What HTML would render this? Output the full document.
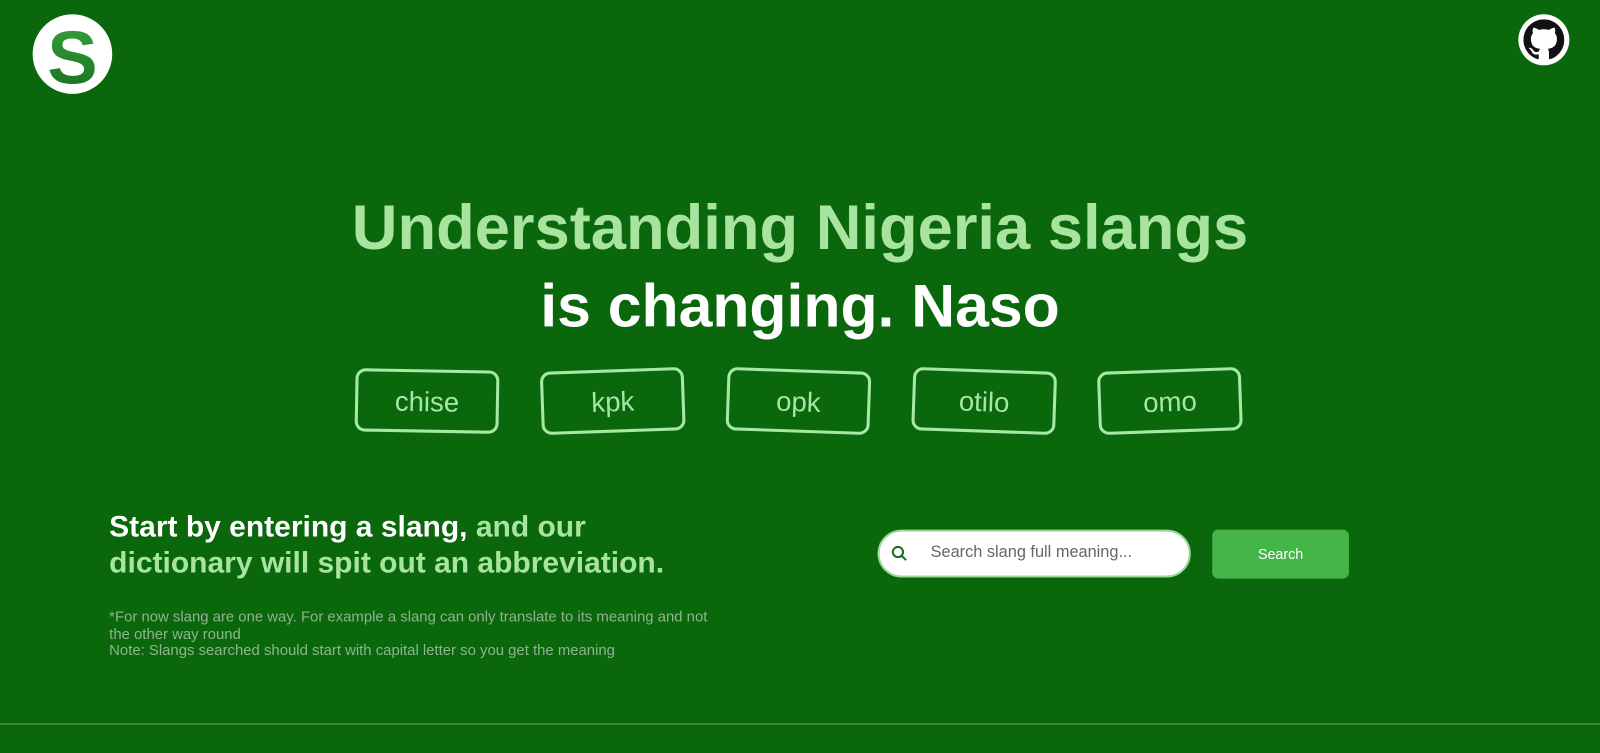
<!DOCTYPE html>
<html><head><style>
body{margin:0;width:1600px;height:753px;background:#0a670c;font-family:"Liberation Sans",sans-serif;overflow:hidden;position:relative}
#w{position:absolute;left:0;top:0;width:1568px;height:738px;transform:scale(1.0204);transform-origin:0 0}
.a{position:absolute}
.logo{left:32px;top:14px;width:78px;height:78px;border-radius:50%;background:#fff}
.gh{left:1488px;top:14px;width:50px;height:50px;border-radius:50%;background:#fff}
h1{position:absolute;left:0;width:1568px;text-align:center;margin:0;font-weight:bold;line-height:1}
.pill{position:absolute;top:362px;width:141px;height:62px;border:3px solid #a6e8a6;border-radius:10px;color:#a8e6a8;font-size:27px;text-align:center;line-height:58px;box-sizing:border-box}
.lead{left:107px;top:499px;font-size:29.4px;font-weight:bold;color:#fff;line-height:35px;width:556px}
.note{left:107px;top:597px;font-size:14.6px;color:#8fb48f;line-height:16.5px;width:604px}
.inp{left:860px;top:519px;width:307px;height:47px;border-radius:24px;background:#fff;border:2px solid #9bd89b;box-sizing:border-box}
.btn{left:1188px;top:519px;width:134px;height:48px;border-radius:6px;background:#45b449;color:#fff;font-size:14px;text-align:center;line-height:48px}
</style></head><body><div id="w">
<div class="a logo"><svg width="78" height="78" viewBox="0 0 78 78"><defs><linearGradient id="g" x1="0" y1="0" x2="0" y2="1"><stop offset="0" stop-color="#3aa33a"/><stop offset="1" stop-color="#136e22"/></linearGradient></defs><text x="39" y="68" text-anchor="middle" font-family="Liberation Sans" font-weight="bold" font-size="74" fill="url(#g)">S</text></svg></div>
<div class="a gh"><svg class="a" style="left:5px;top:5px" width="40" height="40" viewBox="0 0 16 16"><path fill="#111" d="M8 0C3.58 0 0 3.58 0 8c0 3.54 2.29 6.53 5.47 7.59.4.07.55-.17.55-.38 0-.19-.01-.82-.01-1.49-2.01.37-2.53-.49-2.69-.94-.09-.23-.48-.94-.82-1.13-.28-.15-.68-.52-.01-.53.63-.01 1.08.58 1.23.82.72 1.21 1.87.87 2.33.66.07-.52.28-.87.51-1.07-1.78-.2-3.64-.89-3.64-3.95 0-.87.31-1.59.82-2.15-.08-.2-.36-1.02.08-2.12 0 0 .67-.21 2.2.82.64-.18 1.32-.27 2-.27.68 0 1.36.09 2 .27 1.530-1.04 2.2-.82 2.2-.82.44 1.1.16 1.92.08 2.12.51.56.82 1.27.82 2.15 0 3.07-1.87 3.75-3.65 3.95.29.25.54.73.54 1.48 0 1.07-.01 1.93-.01 2.2 0 .21.15.46.55.38A8 8 0 0 0 16 8c0-4.42-3.58-8-8-8z"/></svg></div>
<h1 style="top:193px;color:#a8e4a0;font-size:62px">Understanding Nigeria slangs</h1>
<h1 style="top:270px;color:#fff;font-size:59.5px">is changing. Naso</h1>
<div class="pill" style="left:348px;transform:rotate(1deg)">chise</div>
<div class="pill" style="left:530px;transform:rotate(-2deg)">kpk</div>
<div class="pill" style="left:712px;transform:rotate(2deg)">opk</div>
<div class="pill" style="left:894px;transform:rotate(2deg)">otilo</div>
<div class="pill" style="left:1076px;transform:rotate(-2deg)">omo</div>
<div class="a lead">Start by entering a slang, <span style="color:#a8e4a0">and our dictionary will spit out an abbreviation.</span></div>
<div class="a note">*For now slang are one way. For example a slang can only translate to its meaning and not the other way round<br>Note: Slangs searched should start with capital letter so you get the meaning</div>
<div class="a inp"><svg class="a" style="left:10px;top:12px" width="20" height="20" viewBox="0 0 20 20"><circle cx="8" cy="8" r="5" fill="none" stroke="#1f6b24" stroke-width="2"/><path d="M12 12l4 4" stroke="#1f6b24" stroke-width="2"/></svg><span class="a" style="left:50px;top:12px;font-size:16px;color:#666">Search slang full meaning...</span></div>
<div class="a btn">Search</div>
<div class="a" style="left:0;top:709px;width:1568px;height:1px;background:#5fa860"></div>
</div></body></html>
